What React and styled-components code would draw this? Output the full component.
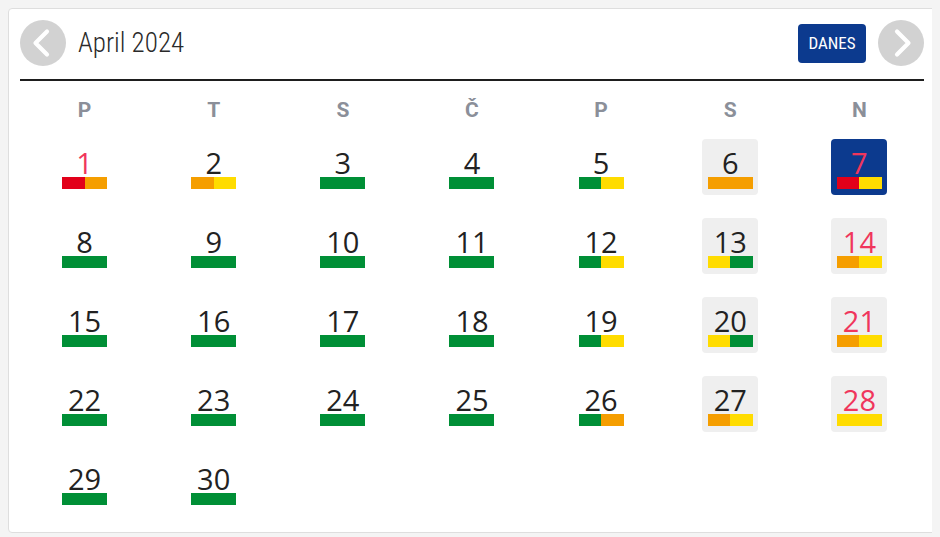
import React from "react";
import styled, { createGlobalStyle } from "styled-components";

const colors = {
  red: "#e2001a",
  orange: "#f59e00",
  yellow: "#ffdc00",
  green: "#008f36",
  navy: "#0c3a8e",
  holiday: "#f0365c",
  text: "#222222",
  grey: "#8b8f99",
  nav: "#d2d2d2",
};

const GlobalStyle = createGlobalStyle`
  body {
    margin: 8px;
    background: #f4f4f4;
    font-family: "Open Sans", sans-serif;
  }
`;

const weekDays = ["P", "T", "S", "Č", "P", "S", "N"];

const g = [colors.green];
const days = [
  { d: 1, bars: [colors.red, colors.orange], holiday: true },
  { d: 2, bars: [colors.orange, colors.yellow] },
  { d: 3, bars: g },
  { d: 4, bars: g },
  { d: 5, bars: [colors.green, colors.yellow] },
  { d: 6, bars: [colors.orange] },
  { d: 7, bars: [colors.red, colors.yellow], today: true },
  { d: 8, bars: g },
  { d: 9, bars: g },
  { d: 10, bars: g },
  { d: 11, bars: g },
  { d: 12, bars: [colors.green, colors.yellow] },
  { d: 13, bars: [colors.yellow, colors.green] },
  { d: 14, bars: [colors.orange, colors.yellow] },
  { d: 15, bars: g },
  { d: 16, bars: g },
  { d: 17, bars: g },
  { d: 18, bars: g },
  { d: 19, bars: [colors.green, colors.yellow] },
  { d: 20, bars: [colors.yellow, colors.green] },
  { d: 21, bars: [colors.orange, colors.yellow] },
  { d: 22, bars: g },
  { d: 23, bars: g },
  { d: 24, bars: g },
  { d: 25, bars: g },
  { d: 26, bars: [colors.green, colors.orange] },
  { d: 27, bars: [colors.orange, colors.yellow] },
  { d: 28, bars: [colors.yellow] },
  { d: 29, bars: g },
  { d: 30, bars: g },
];

const Chevron = ({ dir }) => (
  <svg width="46" height="46" viewBox="0 0 46 46">
    <path
      d={dir === "left" ? "M27 11.5 L15.5 23 L27 34.5" : "M19 11.5 L30.5 23 L19 34.5"}
      fill="none"
      stroke="#fff"
      strokeWidth="4.2"
      strokeLinecap="round"
      strokeLinejoin="round"
    />
  </svg>
);

const App = () => {
  return (
    <>
      <GlobalStyle />
      <Card>
        <Header>
          <NavButton type="button" aria-label="prejšnji">
            <Chevron dir="left" />
          </NavButton>
          <Title>April 2024</Title>
          <TodayButton type="button">DANES</TodayButton>
          <NavButton type="button" aria-label="naslednji">
            <Chevron dir="right" />
          </NavButton>
        </Header>
        <Divider />
        <Grid>
          {weekDays.map((w, i) => (
            <WeekDay key={i}>{w}</WeekDay>
          ))}
          {days.map((day, i) => {
            const weekend = i % 7 >= 5;
            return (
              <Slot key={day.d}>
                <DayBox weekend={weekend} today={day.today}>
                  <DayNumber red={day.holiday || i % 7 === 6}>{day.d}</DayNumber>
                  <Bar>
                    {day.bars.map((c, j) => (
                      <BarPart key={j} color={c} />
                    ))}
                  </Bar>
                </DayBox>
              </Slot>
            );
          })}
        </Grid>
      </Card>
    </>
  );
};

const Card = styled.div`
  width: 904px;
  padding: 11px 11px 21px;
  background: #fff;
  border: 1px solid #dedede;
  border-radius: 4px;
`;

const Header = styled.div`
  display: flex;
  align-items: center;
  gap: 12px;
  height: 46px;
`;

const NavButton = styled.button`
  width: 46px;
  height: 46px;
  padding: 0;
  border: none;
  border-radius: 50%;
  background: ${colors.nav};
  display: flex;
  align-items: center;
  justify-content: center;
  cursor: pointer;
`;

const Title = styled.h1`
  flex: 1;
  margin: 0;
  font-family: "Roboto Condensed", "Liberation Sans Narrow", Roboto, sans-serif;
  font-weight: 300;
  font-size: 27px;
  color: #2a2a2a;
`;

const TodayButton = styled.button`
  height: 39px;
  width: 68px;
  padding: 0;
  border: none;
  border-radius: 4px;
  background: ${colors.navy};
  color: #fff;
  font-family: "Roboto Condensed", "Liberation Sans Narrow", Roboto, sans-serif;
  font-size: 17px;
  cursor: pointer;
`;

const Divider = styled.div`
  height: 2px;
  background: #1e1e1e;
  margin-top: 13px;
`;

const Grid = styled.div`
  display: grid;
  grid-template-columns: repeat(7, 1fr);
  row-gap: 23px;
  padding-top: 17px;
`;

const WeekDay = styled.div`
  font-family: Roboto, sans-serif;
  font-weight: 700;
  font-size: 21px;
  line-height: 24px;
  color: ${colors.grey};
  text-align: center;
  margin-bottom: -6px;
`;

const Slot = styled.div`
  display: flex;
  justify-content: center;
`;

const DayBox = styled.div`
  width: 56px;
  height: 56px;
  box-sizing: border-box;
  padding-bottom: 6px;
  border-radius: 4px;
  display: flex;
  flex-direction: column;
  align-items: center;
  justify-content: flex-end;
  background: ${({ weekend, today }) =>
    today ? colors.navy : weekend ? "#efefef" : "transparent"};
`;

const DayNumber = styled.span`
  font-size: 29px;
  line-height: 29px;
  color: ${({ red }) => (red ? colors.holiday : colors.text)};
`;

const Bar = styled.div`
  display: flex;
  width: 45px;
  height: 12px;
`;

const BarPart = styled.div`
  flex: 1;
  background: ${({ color }) => color};
`;

export default App;
